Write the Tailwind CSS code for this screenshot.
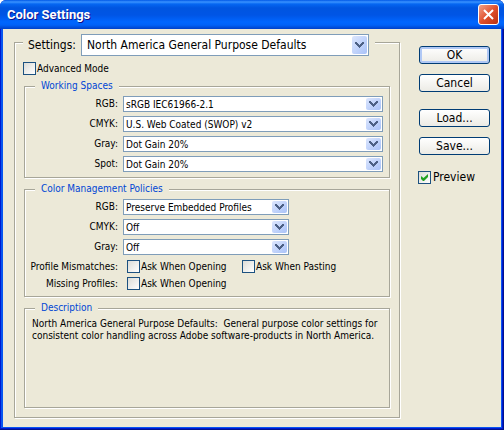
<!DOCTYPE html>
<html lang="en">
<head>
<meta charset="utf-8">
<title>Color Settings</title>
<script src="https://cdn.jsdelivr.net/npm/@tailwindcss/browser@4"></script>
</head>
<body class="min-h-screen bg-white font-['DejaVu_Sans_Condensed','DejaVu_Sans',sans-serif] text-[10px] leading-[12px] text-black">
<svg class="hidden">
  <symbol id="chevron" viewBox="0 1 9 6"><path d="M0 1h2v1h1v1h1v1h1v-1h1v-1h1v-1h2v2h-1v1h-1v1h-1v1h-1v1h-1v-1h-1v-1h-1v-1h-1v-1h-1z" fill="#4d6185"/></symbol>
  <symbol id="tick" viewBox="0 0 7 7"><path d="M0 2v3l2 2h1l4-4v-3l-4.500 4z" fill="#21a121"/></symbol>
</svg>
<main class="flex min-h-screen flex-col rounded-t-md border-r border-b border-[#00138c] bg-[#0019cf]">
  <header class="-mr-px flex h-[29px] items-center justify-between rounded-t-md bg-[linear-gradient(#0058e6_0,#3a93ff_2px,#0567f2_4px,#0055e0_8px,#0055e5_15px,#0066ff_22px,#0062f8_25px,#0040c8_29px)] pr-[5px] pl-[7px]">
    <h1 class="font-[Roboto,'Noto_Sans',sans-serif] text-[13px] leading-[16px] font-bold text-white [text-shadow:1px_1px_#0f1089]">Color Settings</h1>
    <button aria-label="Close" class="flex size-[21px] items-center justify-center rounded-[3px] border border-white bg-linear-to-br from-[#f0a088] via-[#e0502c] to-[#b83010]">
      <svg class="size-[11px]" viewBox="0 0 11 11"><path d="M1 1l9 9M10 1l-9 9" stroke="#fff" stroke-width="2"/></svg>
    </button>
  </header>
  <div class="mr-px mb-px ml-px flex grow gap-[18px] border-r border-b border-l-2 border-[#0855f0] bg-[#ece9d8] pt-[5px] pr-[11px] pb-[9px] pl-[11px]">
    <fieldset class="flex min-w-0 grow flex-col border border-[#a7a699] pr-[9px] pb-[9px] pl-[9px] shadow-[1px_1px_#fff,inset_1px_1px_#fff]">
      <legend class="-ml-px h-[17px] bg-[#ece9d8] pr-[6px] pl-[5px]">
        <span class="flex h-[22px] items-center gap-[4px]">
          <label for="settings" class="w-[49px] text-[12px] leading-[16px]">Settings:</label>
          <span class="relative block w-[288px]">
            <select id="settings" class="block h-[22px] w-full appearance-none border border-[#7f9db9] bg-white pl-[5px] text-[12px] leading-[16px]"><option>North America General Purpose Defaults</option></select>
            <span class="pointer-events-none absolute top-[2px] right-[2px] flex h-[18px] w-[15px] items-center justify-center rounded-[2px] bg-linear-to-br from-[#dce6fd] to-[#a9c2f8]"><svg class="h-[6px] w-[9px]"><use href="#chevron"/></svg></span>
          </span>
        </span>
      </legend>
      <div class="mt-[11px] -ml-px flex h-[13px] items-center gap-[1px]">
        <input id="advanced" type="checkbox" class="size-[13px] shrink-0 appearance-none border border-[#1c5180] bg-linear-to-br from-[#dcdcd7] to-white">
        <label for="advanced">Advanced Mode</label>
      </div>

      <fieldset class="mt-[5px] min-w-0 border border-[#a7a699] pr-[6px] pb-[5px] shadow-[1px_1px_#fff,inset_1px_1px_#fff]">
        <legend class="ml-[10px] bg-[#ece9d8] px-[6px] text-[#0046d5]">Working Spaces</legend>
        <div class="grid grid-cols-[93px_1fr] items-center gap-x-[5px] gap-y-[4px] pt-[4px]">
          <label for="w1" class="text-right">RGB:</label>
          <span class="relative block">
            <select id="w1" class="block h-[16px] w-full appearance-none border border-[#7f9db9] bg-white pt-px pl-[2px]"><option>sRGB IEC61966-2.1</option></select>
            <span class="pointer-events-none absolute top-[2px] right-[2px] flex h-[12px] w-[15px] items-center justify-center rounded-[2px] bg-linear-to-br from-[#dce6fd] to-[#a9c2f8]"><svg class="h-[6px] w-[9px]"><use href="#chevron"/></svg></span>
          </span>
          <label for="w2" class="text-right">CMYK:</label>
          <span class="relative block">
            <select id="w2" class="block h-[16px] w-full appearance-none border border-[#7f9db9] bg-white pt-px pl-[2px]"><option>U.S. Web Coated (SWOP) v2</option></select>
            <span class="pointer-events-none absolute top-[2px] right-[2px] flex h-[12px] w-[15px] items-center justify-center rounded-[2px] bg-linear-to-br from-[#dce6fd] to-[#a9c2f8]"><svg class="h-[6px] w-[9px]"><use href="#chevron"/></svg></span>
          </span>
          <label for="w3" class="text-right">Gray:</label>
          <span class="relative block">
            <select id="w3" class="block h-[16px] w-full appearance-none border border-[#7f9db9] bg-white pt-px pl-[2px]"><option>Dot Gain 20%</option></select>
            <span class="pointer-events-none absolute top-[2px] right-[2px] flex h-[12px] w-[15px] items-center justify-center rounded-[2px] bg-linear-to-br from-[#dce6fd] to-[#a9c2f8]"><svg class="h-[6px] w-[9px]"><use href="#chevron"/></svg></span>
          </span>
          <label for="w4" class="text-right">Spot:</label>
          <span class="relative block">
            <select id="w4" class="block h-[16px] w-full appearance-none border border-[#7f9db9] bg-white pt-px pl-[2px]"><option>Dot Gain 20%</option></select>
            <span class="pointer-events-none absolute top-[2px] right-[2px] flex h-[12px] w-[15px] items-center justify-center rounded-[2px] bg-linear-to-br from-[#dce6fd] to-[#a9c2f8]"><svg class="h-[6px] w-[9px]"><use href="#chevron"/></svg></span>
          </span>
        </div>
      </fieldset>

      <fieldset class="mt-[5px] min-w-0 border border-[#a7a699] pb-[6px] shadow-[1px_1px_#fff,inset_1px_1px_#fff]">
        <legend class="ml-[10px] bg-[#ece9d8] px-[6px] text-[#0046d5]">Color Management Policies</legend>
        <div class="grid grid-cols-[93px_166px] items-center gap-x-[5px] gap-y-[4px] pt-[4px]">
          <label for="p1" class="text-right">RGB:</label>
          <span class="relative block">
            <select id="p1" class="block h-[16px] w-full appearance-none border border-[#7f9db9] bg-white pt-px pl-[2px]"><option>Preserve Embedded Profiles</option></select>
            <span class="pointer-events-none absolute top-[2px] right-[2px] flex h-[12px] w-[15px] items-center justify-center rounded-[2px] bg-linear-to-br from-[#dce6fd] to-[#a9c2f8]"><svg class="h-[6px] w-[9px]"><use href="#chevron"/></svg></span>
          </span>
          <label for="p2" class="text-right">CMYK:</label>
          <span class="relative block">
            <select id="p2" class="block h-[16px] w-full appearance-none border border-[#7f9db9] bg-white pt-px pl-[2px]"><option>Off</option></select>
            <span class="pointer-events-none absolute top-[2px] right-[2px] flex h-[12px] w-[15px] items-center justify-center rounded-[2px] bg-linear-to-br from-[#dce6fd] to-[#a9c2f8]"><svg class="h-[6px] w-[9px]"><use href="#chevron"/></svg></span>
          </span>
          <label for="p3" class="text-right">Gray:</label>
          <span class="relative block">
            <select id="p3" class="block h-[16px] w-full appearance-none border border-[#7f9db9] bg-white pt-px pl-[2px]"><option>Off</option></select>
            <span class="pointer-events-none absolute top-[2px] right-[2px] flex h-[12px] w-[15px] items-center justify-center rounded-[2px] bg-linear-to-br from-[#dce6fd] to-[#a9c2f8]"><svg class="h-[6px] w-[9px]"><use href="#chevron"/></svg></span>
          </span>
        </div>
        <div class="mt-[5px] grid grid-cols-[93px_106px_auto] items-center justify-start gap-x-[9px] gap-y-[4px] whitespace-nowrap">
          <span class="text-right">Profile Mismatches:</span>
          <span class="flex items-center gap-[1px]"><input id="m1" type="checkbox" class="size-[13px] shrink-0 appearance-none border border-[#1c5180] bg-linear-to-br from-[#dcdcd7] to-white"><label for="m1">Ask When Opening</label></span>
          <span class="flex items-center gap-[1px]"><input id="m2" type="checkbox" class="size-[13px] shrink-0 appearance-none border border-[#1c5180] bg-linear-to-br from-[#dcdcd7] to-white"><label for="m2">Ask When Pasting</label></span>
          <span class="text-right">Missing Profiles:</span>
          <span class="flex items-center gap-[1px]"><input id="m3" type="checkbox" class="size-[13px] shrink-0 appearance-none border border-[#1c5180] bg-linear-to-br from-[#dcdcd7] to-white"><label for="m3">Ask When Opening</label></span>
        </div>
      </fieldset>

      <fieldset class="mt-[5px] min-w-0 grow border border-[#a7a699] px-[7px] shadow-[1px_1px_#fff,inset_1px_1px_#fff]">
        <legend class="ml-[3px] bg-[#ece9d8] px-[6px] text-[#0046d5]">Description</legend>
        <p class="pt-[4px] pb-[4px]">North America General Purpose Defaults:&nbsp; General purpose color settings for consistent color handling across Adobe software-products in North America.</p>
      </fieldset>
    </fieldset>

    <div class="flex w-[72px] shrink-0 flex-col pt-[12px] pl-px text-[12px] leading-[14px]">
      <button class="h-[18px] rounded-[3px] border border-[#003c74] bg-linear-to-b from-white to-[#ecebe5] shadow-[inset_0_0_0_2px_#b0c8f5]">OK</button>
      <button class="mt-[10px] h-[18px] rounded-[3px] border border-[#003c74] bg-linear-to-b from-white to-[#ecebe5]">Cancel</button>
      <button class="mt-[17px] h-[18px] rounded-[3px] border border-[#003c74] bg-linear-to-b from-white to-[#ecebe5]">Load...</button>
      <button class="mt-[10px] h-[18px] rounded-[3px] border border-[#003c74] bg-linear-to-b from-white to-[#ecebe5]">Save...</button>
      <div class="mt-[15px] -ml-px flex items-center gap-[2px]">
        <span class="relative flex"><input id="preview" type="checkbox" checked class="size-[13px] shrink-0 appearance-none border border-[#1c5180] bg-linear-to-br from-[#dcdcd7] to-white"><svg class="pointer-events-none absolute top-[3px] left-[3px] size-[7px]"><use href="#tick"/></svg></span>
        <label for="preview">Preview</label>
      </div>
    </div>
  </div>
</main>
</body>
</html>
